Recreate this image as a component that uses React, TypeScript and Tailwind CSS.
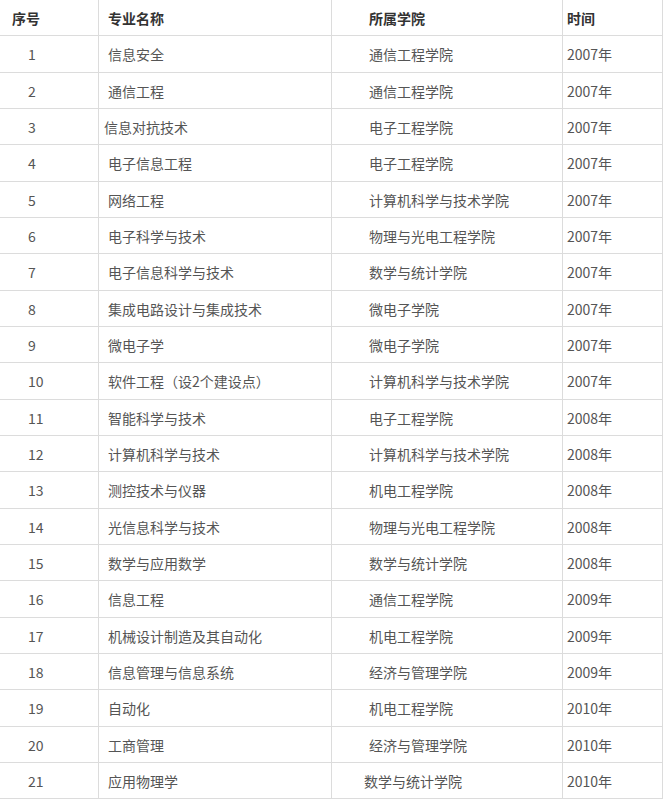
import React from "react";

type Row = { n: string; name: string; school: string; year: string; nameCls?: string; schoolCls?: string };

const rows: Row[] = [
  { n: "1", name: "信息安全", school: "通信工程学院", year: "2007年" },
  { n: "2", name: "通信工程", school: "通信工程学院", year: "2007年" },
  { n: "3", name: "信息对抗技术", school: "电子工程学院", year: "2007年", nameCls: "pl-[5px]" },
  { n: "4", name: "电子信息工程", school: "电子工程学院", year: "2007年" },
  { n: "5", name: "网络工程", school: "计算机科学与技术学院", year: "2007年" },
  { n: "6", name: "电子科学与技术", school: "物理与光电工程学院", year: "2007年" },
  { n: "7", name: "电子信息科学与技术", school: "数学与统计学院", year: "2007年" },
  { n: "8", name: "集成电路设计与集成技术", school: "微电子学院", year: "2007年" },
  { n: "9", name: "微电子学", school: "微电子学院", year: "2007年" },
  { n: "10", name: "软件工程（设2个建设点）", school: "计算机科学与技术学院", year: "2007年" },
  { n: "11", name: "智能科学与技术", school: "电子工程学院", year: "2008年" },
  { n: "12", name: "计算机科学与技术", school: "计算机科学与技术学院", year: "2008年" },
  { n: "13", name: "测控技术与仪器", school: "机电工程学院", year: "2008年" },
  { n: "14", name: "光信息科学与技术", school: "物理与光电工程学院", year: "2008年" },
  { n: "15", name: "数学与应用数学", school: "数学与统计学院", year: "2008年" },
  { n: "16", name: "信息工程", school: "通信工程学院", year: "2009年" },
  { n: "17", name: "机械设计制造及其自动化", school: "机电工程学院", year: "2009年" },
  { n: "18", name: "信息管理与信息系统", school: "经济与管理学院", year: "2009年" },
  { n: "19", name: "自动化", school: "机电工程学院", year: "2010年" },
  { n: "20", name: "工商管理", school: "经济与管理学院", year: "2010年" },
  { n: "21", name: "应用物理学", school: "数学与统计学院", year: "2010年", schoolCls: "pl-[32px]" },
];

const heights = ["h-[37px]", "h-[36px]", "h-[36px]"];

export default function App() {
  return (
    <div
      className="w-[665px] h-[801px] bg-white text-[14px] leading-none"
      style={{ fontFamily: '"Noto Sans CJK SC", "Noto Sans", sans-serif' }}
    >
      <div className="w-[663px] flex flex-col">
        <div className="grid grid-cols-[99px_233px_231px_100px] h-[36px] text-[#333] font-bold">
          <div className="border-r border-b border-[#dcdcdc] flex items-center pl-[12px]">序号</div>
          <div className="border-r border-b border-[#dcdcdc] flex items-center pl-[9px]">专业名称</div>
          <div className="border-r border-b border-[#dcdcdc] flex items-center pl-[37px]">所属学院</div>
          <div className="border-r border-b border-[#dcdcdc] flex items-center pl-[4px]">时间</div>
        </div>
        {rows.map((r, i) => (
          <div key={r.n} className={`grid grid-cols-[99px_233px_231px_100px] text-[#555] ${heights[i % 3]}`}>
            <div className="border-r border-b border-[#dcdcdc] flex items-center pl-[28px]">{r.n}</div>
            <div className={`border-r border-b border-[#dcdcdc] flex items-center ${r.nameCls ?? "pl-[9px]"}`}>{r.name}</div>
            <div className={`border-r border-b border-[#dcdcdc] flex items-center ${r.schoolCls ?? "pl-[37px]"}`}>{r.school}</div>
            <div className="border-r border-b border-[#dcdcdc] flex items-center pl-[4px]">{r.year}</div>
          </div>
        ))}
      </div>
    </div>
  );
}
